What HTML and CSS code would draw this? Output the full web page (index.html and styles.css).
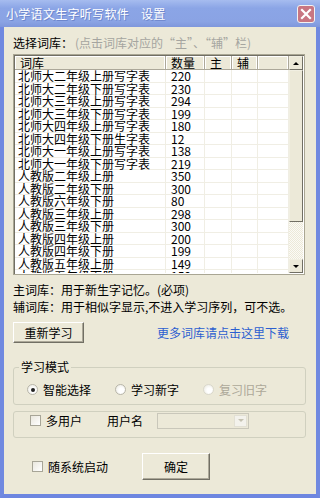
FILE: index.html
```html
<!DOCTYPE html>
<html lang="zh-CN">
<head>
    <meta charset="UTF-8">
    <title>设置</title>
    <link rel="stylesheet" href="styles.css">
</head>
<body>
    <div class="window">
        <div class="titlebar">
            <span class="title">小学语文生字听写软件&nbsp;&nbsp;&nbsp;&nbsp;设置</span>
            <span class="close">
                <svg width="12" height="12" viewBox="0 0 12 12"><path d="M2 2 L10 10 M10 2 L2 10" stroke="#fff" stroke-width="2.2" stroke-linecap="square"/></svg>
            </span>
        </div>
        <div class="frame">
            <div class="pick">选择词库：<span class="hint">(点击词库对应的“主”、“辅”栏)</span></div>

            <div class="listbox">
                <div class="list">
                    <div class="row head">
                        <div>词库</div><div>数量</div><div>主</div><div>辅</div><div></div>
                    </div>
                    <div class="row"><div>北师大二年级上册写字表</div><div>220</div><div></div><div></div><div></div></div>
                    <div class="row"><div>北师大二年级下册写字表</div><div>230</div><div></div><div></div><div></div></div>
                    <div class="row"><div>北师大三年级上册写字表</div><div>294</div><div></div><div></div><div></div></div>
                    <div class="row"><div>北师大三年级下册写字表</div><div>199</div><div></div><div></div><div></div></div>
                    <div class="row"><div>北师大四年级上册写字表</div><div>180</div><div></div><div></div><div></div></div>
                    <div class="row"><div>北师大四年级下册生字表</div><div>12</div><div></div><div></div><div></div></div>
                    <div class="row"><div>北师大一年级上册写字表</div><div>138</div><div></div><div></div><div></div></div>
                    <div class="row"><div>北师大一年级下册写字表</div><div>219</div><div></div><div></div><div></div></div>
                    <div class="row"><div>人教版二年级上册</div><div>350</div><div></div><div></div><div></div></div>
                    <div class="row"><div>人教版二年级下册</div><div>300</div><div></div><div></div><div></div></div>
                    <div class="row"><div>人教版六年级下册</div><div>80</div><div></div><div></div><div></div></div>
                    <div class="row"><div>人教版三年级上册</div><div>298</div><div></div><div></div><div></div></div>
                    <div class="row"><div>人教版三年级下册</div><div>300</div><div></div><div></div><div></div></div>
                    <div class="row"><div>人教版四年级上册</div><div>200</div><div></div><div></div><div></div></div>
                    <div class="row"><div>人教版四年级下册</div><div>199</div><div></div><div></div><div></div></div>
                    <div class="row"><div>人教版五年级上册</div><div>149</div><div></div><div></div><div></div></div>
                    <div class="row"><div>人教版五年级下册</div><div>150</div><div></div><div></div><div></div></div>
                </div>
                <div class="scrollbar">
                    <div class="sb-btn"><span class="arrow-up"></span></div>
                    <div class="sb-thumb"></div>
                    <div class="sb-track"></div>
                    <div class="sb-btn"><span class="arrow-down"></span></div>
                </div>
            </div>

            <div class="notes">
                <div>主词库：用于新生字记忆。(必项)</div>
                <div>辅词库：用于相似字显示,不进入学习序列，可不选。</div>
            </div>

            <div class="actions">
                <button class="btn relearn">重新学习</button>
                <span class="link">更多词库请点击这里下载</span>
            </div>

            <fieldset class="group mode">
                <legend>学习模式</legend>
                <div class="radios">
                    <label class="radio"><span class="dot checked"></span>智能选择</label>
                    <label class="radio"><span class="dot"></span>学习新字</label>
                    <label class="radio disabled"><span class="dot"></span>复习旧字</label>
                </div>
            </fieldset>

            <fieldset class="group users">
                <label class="check"><span class="box"></span>多用户</label>
                <span class="uname">用户名</span>
                <span class="combo"><span class="combo-btn"><span class="arrow-down pale"></span></span></span>
            </fieldset>

            <div class="bottom">
                <label class="check"><span class="box"></span>随系统启动</label>
                <button class="btn ok">确定</button>
            </div>
        </div>
    </div>
</body>
</html>
```

FILE: styles.css
```css
body {
    margin: 0;
    font-family: "Noto Sans CJK SC", "Liberation Sans", sans-serif;
    font-size: 12px;
    color: #000;
    background: #ece9d8;
}

.window {
    width: 320px;
    height: 498px;
    display: flex;
    flex-direction: column;
}

.titlebar {
    height: 27px;
    flex-shrink: 0;
    display: flex;
    align-items: center;
    justify-content: space-between;
    padding: 0 5px 0 6px;
    box-sizing: border-box;
    background: linear-gradient(#a6bcef, #8ba5e6 30%, #8aa3e4 80%, #7f97dc);
}

.title {
    color: #fff;
    font-size: 12px;
    letter-spacing: 0.3px;
    text-shadow: 1px 1px 0 #6d86cc;
}

.close {
    width: 18px;
    height: 18px;
    border: 1px solid #f2f2f2;
    border-radius: 3px;
    background: #c87682;
    display: flex;
    align-items: center;
    justify-content: center;
    box-sizing: border-box;
}

.frame {
    flex: 1;
    border-left: 4px solid #7089e0;
    border-right: 4px solid #7089e0;
    border-bottom: 4px solid #6d86e0;
    padding: 0 0 0 9px;
    display: flex;
    flex-direction: column;
    align-items: flex-start;
}

.pick {
    margin-top: 9px;
    line-height: 14px;
}

.hint {
    color: #a5a5a0;
    margin-left: 2px;
}

.listbox {
    margin-top: 4px;
    width: 292px;
    height: 221px;
    box-sizing: border-box;
    border: 1px solid #a9a693;
    box-shadow: inset 1px 1px 0 #716f64;
    background: #fff;
    display: flex;
    padding: 1px;
}

.list {
    flex: 1;
    overflow: hidden;
}

.row {
    display: grid;
    grid-template-columns: 151px 39px 27px 26px 31px;
    height: 12.5px;
    line-height: 12px;
    box-sizing: border-box;
    border-bottom: 1px solid #f0eee4;
}

.row div {
    border-right: 1px solid #f0eee4;
    padding-left: 3px;
    white-space: nowrap;
}

.row div:nth-child(2) {
    padding-left: 5px;
}

.row.head {
    height: 14px;
    line-height: 13px;
    background: #ece9d8;
    border-bottom: 1px solid #aca899;
}

.row.head div {
    border-right: 1px solid #aca899;
    box-shadow: inset -1px 0 0 #fff, inset 1px 1px 0 #fff;
    padding-left: 5px;
}

.scrollbar {
    width: 14px;
    display: flex;
    flex-direction: column;
}

.sb-btn {
    height: 14px;
    box-sizing: border-box;
    background: #ece9d8;
    border: 1px solid;
    border-color: #f1efe2 #716f64 #716f64 #f1efe2;
    display: flex;
    align-items: center;
    justify-content: center;
}

.sb-thumb {
    height: 152px;
    box-sizing: border-box;
    background: #ece9d8;
    border: 1px solid;
    border-color: #f1efe2 #716f64 #716f64 #f1efe2;
}

.sb-track {
    flex: 1;
    background-color: #f4f3ee;
    background-image: repeating-conic-gradient(#ece9d8 0 25%, #fbfaf6 0 50%);
    background-size: 2px 2px;
}

.arrow-up,
.arrow-down {
    width: 0;
    height: 0;
    border-left: 3px solid transparent;
    border-right: 3px solid transparent;
}

.arrow-up {
    border-bottom: 3px solid #000;
}

.arrow-down {
    border-top: 3px solid #000;
}

.arrow-down.pale {
    border-top-color: #c5c2b2;
}

.notes {
    margin-top: 6px;
    line-height: 17px;
}

.actions {
    margin-top: 7px;
    display: flex;
    align-items: center;
}

.btn {
    font-family: inherit;
    font-size: 12px;
    background: #ece9d8;
    border: 1px solid;
    border-color: #fff #716f64 #716f64 #fff;
    box-shadow: inset -1px -1px 0 #aca899;
    padding: 0;
    color: #000;
}

.relearn {
    width: 71px;
    height: 21px;
}

.link {
    margin-left: 73px;
    color: #2c5fd0;
    white-space: nowrap;
}

.group {
    margin: 0;
    border: 1px solid #d0d0bf;
    border-radius: 3px;
    width: 293px;
    box-sizing: border-box;
    padding: 0;
}

.mode {
    margin-top: 17px;
    height: 45px;
}

.mode legend {
    margin-left: 5px;
    padding: 0 2px;
    line-height: 14px;
}

.radios {
    display: flex;
    padding: 7px 0 0 13px;
}

.radio {
    display: flex;
    align-items: center;
    gap: 5px;
    width: 88px;
}

.radio.disabled {
    color: #aca899;
}

.dot {
    width: 11px;
    height: 11px;
    border-radius: 50%;
    box-sizing: border-box;
    border: 1px solid #b8b6aa;
    background: radial-gradient(circle at 60% 60%, #fff 30%, #e8e6dc);
    display: flex;
    align-items: center;
    justify-content: center;
}

.dot.checked::after {
    content: "";
    width: 4px;
    height: 4px;
    border-radius: 50%;
    background: #222;
}

.radio.disabled .dot {
    border-color: #dad8cc;
}

.users {
    margin-top: 6px;
    height: 27px;
    display: flex;
    align-items: center;
    padding-left: 16px;
}

.check {
    display: flex;
    align-items: center;
    gap: 5px;
}

.box {
    width: 11px;
    height: 11px;
    box-sizing: border-box;
    border: 1px solid #a7a597;
    background: linear-gradient(135deg, #e9e7dd, #fff);
}

.uname {
    margin-left: 25px;
}

.combo {
    margin-left: 14px;
    width: 92px;
    height: 16px;
    box-sizing: border-box;
    border: 1px solid #c9c7ba;
    background: #ece9d8;
    display: flex;
    justify-content: flex-end;
    padding: 1px;
}

.combo-btn {
    width: 13px;
    box-sizing: border-box;
    border: 1px solid #e2e0d4;
    background: #f3f2ec;
    display: flex;
    align-items: center;
    justify-content: center;
}

.bottom {
    margin-top: 15px;
    display: flex;
    align-items: center;
    padding-left: 19px;
}

.ok {
    margin-left: 34px;
    width: 68px;
    height: 27px;
}
```
